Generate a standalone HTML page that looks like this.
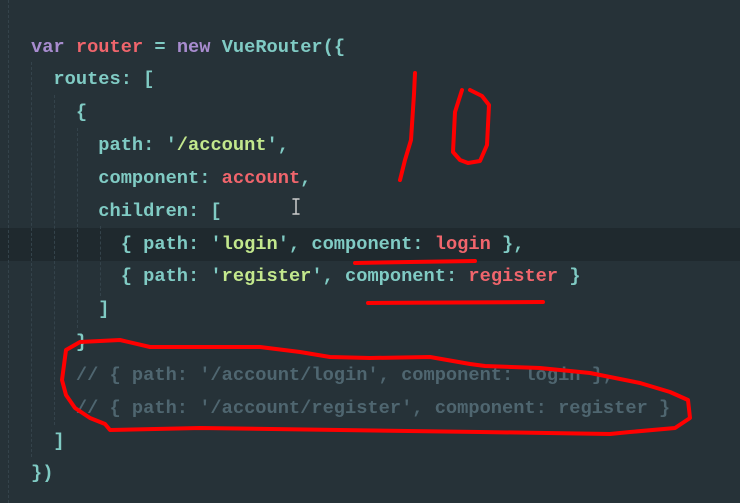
<!DOCTYPE html>
<html><head><meta charset="utf-8"><style>
html,body{margin:0;padding:0;}
body{width:740px;height:503px;background:#263238;overflow:hidden;position:relative;font-family:"Liberation Mono",monospace;}
.hl{position:absolute;left:0;top:228px;width:740px;height:33px;background:#1f292e;}
.code{position:absolute;left:31px;top:30.5px;font-size:18.7px;font-weight:bold;line-height:32.85px;white-space:pre;color:#80cbc4;}
.k{color:#a88ccf}.r{color:#f0656c}.s{color:#c3e88d}.c{color:#4f6670;}
.g{position:absolute;top:0;width:0;border-left:1px dashed #34434b;}
svg{position:absolute;left:0;top:0;}
</style></head><body>
<div class="hl"></div>
<div class="g" style="left:8px;height:503px"></div>
<div class="g" style="left:31px;top:62px;height:395px"></div>
<div class="g" style="left:54px;top:95px;height:330px"></div>
<div class="g" style="left:77px;top:128px;height:200px"></div>
<div class="g" style="left:100px;top:226px;height:70px"></div>
<div class="code"><span class="k">var</span> <span class="r">router</span> = <span class="k">new</span> VueRouter({
  routes: [
    {
      path: '<span class="s">/account</span>',
      component: <span class="r">account</span>,
      children: [
        { path: '<span class="s">login</span>', component: <span class="r">login</span> },
        { path: '<span class="s">register</span>', component: <span class="r">register</span> }
      ]
    }
    <span class="c">// { path: '/account/login', component: login },</span>
    <span class="c">// { path: '/account/register', component: register }</span>
  ]
})</div>
<svg width="740" height="503" fill="none" stroke="#ff0000" stroke-width="4" stroke-linecap="round" stroke-linejoin="round">
<path d="M293 199 L299 199 M296 199 L296 214 M293 214 L299 214" stroke="#ccc" stroke-width="1.5"/>
<path d="M415 73 L414 94 L411 140 L405 160 L400 180"/>
<path d="M462 90 L455 112 L453 152 L460 160 L468 163 L480 161 L487 145 L489 105 L482 96 L470 90"/>
<path d="M355 263 L410 262 L475 261"/>
<path d="M368 303 L543 302"/>
<path d="M66 350 L80 342 L120 340 L150 347 L260 347 L300 352 L330 357 L370 358 L430 357 L470 364 L485 366 L540 368 L590 373 L640 383 L670 392 L688 400 L690 418 L675 428 L630 432 L610 434 L480 432 L340 430 L200 428 L110 430 L105 424 L90 418 L75 408 L66 395 L62 380 Z"/>
</svg>
</body></html>
